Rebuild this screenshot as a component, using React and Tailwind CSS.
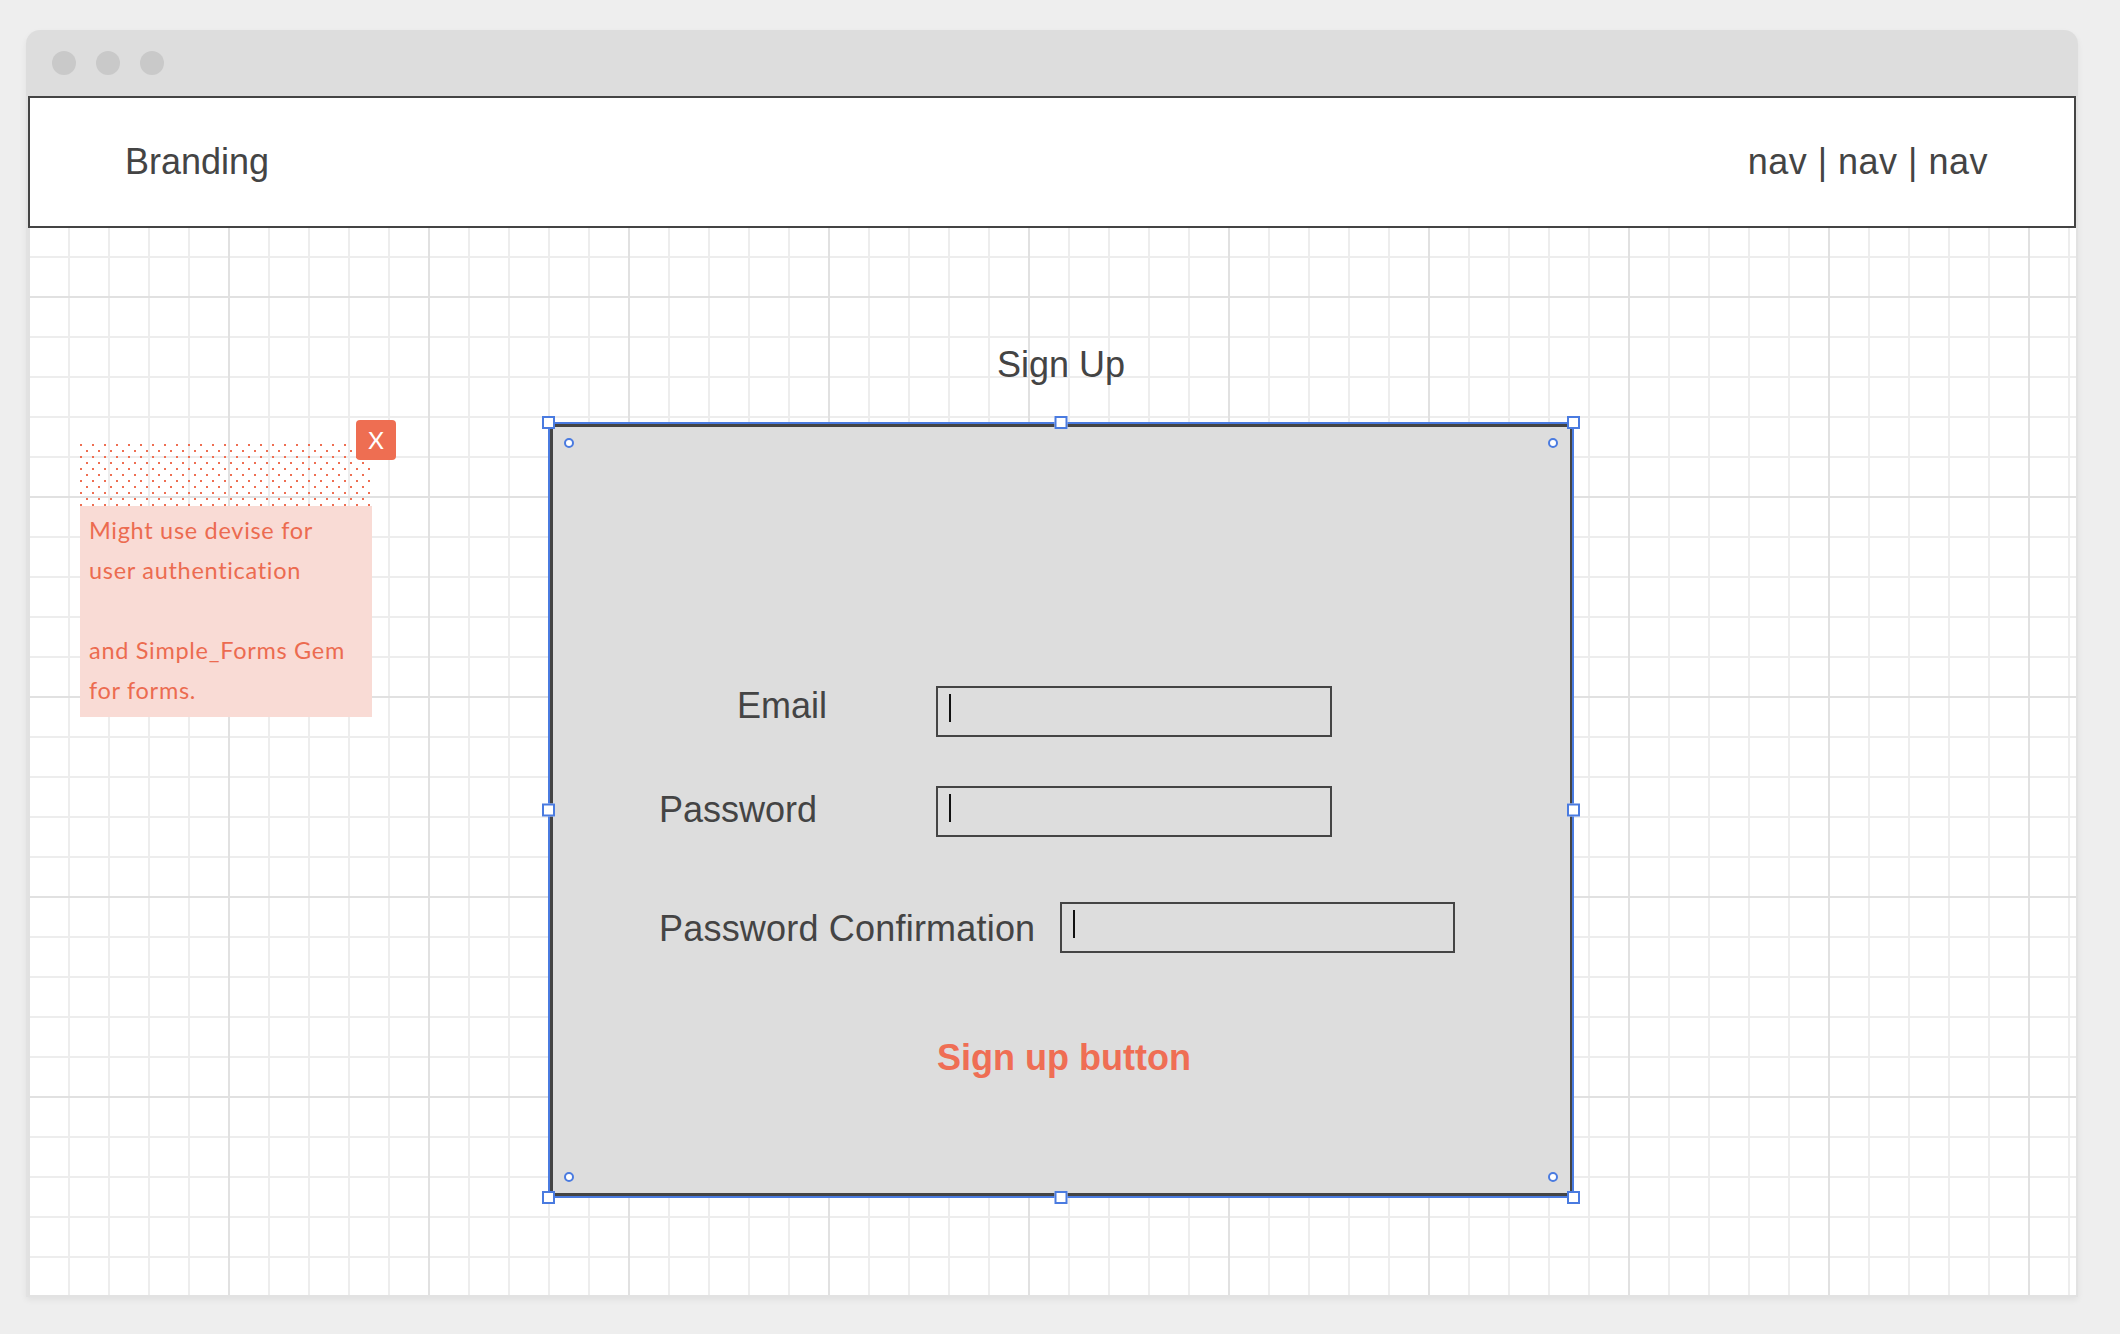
import React from 'react';

const arial = { fontFamily: '"Liberation Sans", Arial, sans-serif' };
const lato = { fontFamily: 'Lato, "Open Sans", sans-serif' };

const Handle = ({ className }) => (
  <div className={`absolute w-[13px] h-[13px] bg-white border-2 border-[#4a7be0] ${className}`} />
);

const Ring = ({ className }) => (
  <div className={`absolute w-[10px] h-[10px] rounded-full bg-white border-2 border-[#4a7be0] ${className}`} />
);

const Cursor = () => <div className="w-[2px] h-[28px] bg-[#111] ml-[11px] mt-[6px]" />;

const Field = ({ width = 'w-[396px]' }) => (
  <div className={`${width} h-[51px] border-2 border-[#444] flex-shrink-0`}>
    <Cursor />
  </div>
);

const StickyNote = () => (
  <div className="absolute left-[52px] top-[192px] w-[316px] pt-[24px]">
    <svg width="292" height="62" className="block">
      <defs>
        <pattern id="dots" width="12" height="12" patternUnits="userSpaceOnUse">
          <rect x="0" y="0" width="2" height="2" fill="#ee6e52" />
          <rect x="6" y="6" width="2" height="2" fill="#ee6e52" />
        </pattern>
      </defs>
      <rect width="292" height="62" fill="url(#dots)" />
    </svg>
    <div
      className="w-[292px] bg-[#f9dbd5] text-[#ec6b50] text-[23.5px] leading-[40px] tracking-[0.7px] pl-[9px] pt-[4px] pb-[7px] whitespace-nowrap"
      style={lato}
    >
      <p>Might use devise for</p>
      <p>user authentication</p>
      <p>&nbsp;</p>
      <p>and Simple_Forms Gem</p>
      <p>for forms.</p>
    </div>
    <button
      className="absolute right-0 top-0 w-[40px] h-[40px] rounded-[4px] bg-[#ee6e52] text-white text-[24px] leading-none flex items-center justify-center"
      style={lato}
    >
      X
    </button>
  </div>
);

const SignUpForm = () => (
  <div className="relative w-[1026px] h-[776px]">
    <div className="h-full border-2 border-[#4a7be0]">
      <div className="h-full border-[3px] border-r-2 border-[#444] bg-[#dddddd] pt-[259px] pl-[106px] text-[#444] text-[36px] leading-none" style={arial}>
        <div className="flex items-start">
          <span className="ml-[78px] w-[199px] mt-[2px]">Email</span>
          <Field />
        </div>
        <div className="flex items-start mt-[49px]">
          <span className="w-[277px] mt-[6px]">Password</span>
          <Field />
        </div>
        <div className="flex items-start mt-[65px]">
          <span className="w-[401px] mt-[9px] whitespace-nowrap tracking-[0.2px]">Password Confirmation</span>
          <Field width="w-[395px]" />
        </div>
        <div className="mt-[87px] ml-[278px] font-bold text-[#ef6e54]">Sign up button</div>
      </div>
    </div>
    <Handle className="-left-[6px] -top-[6px]" />
    <Handle className="left-1/2 -translate-x-1/2 -top-[6px]" />
    <Handle className="-right-[6px] -top-[6px]" />
    <Handle className="-left-[6px] top-1/2 -translate-y-1/2" />
    <Handle className="-right-[6px] top-1/2 -translate-y-1/2" />
    <Handle className="-left-[6px] -bottom-[6px]" />
    <Handle className="left-1/2 -translate-x-1/2 -bottom-[6px]" />
    <Handle className="-right-[6px] -bottom-[6px]" />
    <Ring className="left-[16px] top-[16px]" />
    <Ring className="right-[16px] top-[16px]" />
    <Ring className="left-[16px] bottom-[16px]" />
    <Ring className="right-[16px] bottom-[16px]" />
  </div>
);

export default function App() {
  return (
    <div className="w-[2120px] h-[1334px] bg-[#eeeeee] pt-[30px] pl-[26px] overflow-hidden">
      <div className="w-[2052px] rounded-t-[14px] overflow-hidden shadow-[0_3px_6px_rgba(0,0,0,0.06)]">
        <div className="h-[66px] bg-[#dddddd] flex items-center pl-[26px] gap-[20px]">
          <span className="w-[24px] h-[24px] rounded-full bg-[#c9c9c9]" />
          <span className="w-[24px] h-[24px] rounded-full bg-[#c9c9c9]" />
          <span className="w-[24px] h-[24px] rounded-full bg-[#c9c9c9]" />
        </div>
        <div className="h-[1201px] border-x-2 border-b-2 border-[#e2e2e2] bg-white bg-[image:linear-gradient(to_right,#e1e1e1_2px,transparent_2px),linear-gradient(to_bottom,#e1e1e1_2px,transparent_2px),linear-gradient(to_right,#ededed_2px,transparent_2px),linear-gradient(to_bottom,#ededed_2px,transparent_2px)] bg-[size:200px_200px,200px_200px,40px_40px,40px_40px]">
          <header
            className="h-[132px] border-2 border-[#444] bg-white flex items-center justify-between pl-[95px] pr-[86px] text-[36px] leading-none text-[#444]"
            style={arial}
          >
            <span>Branding</span>
            <span className="tracking-[0.5px]">nav | nav | nav</span>
          </header>
          <main className="relative h-[1067px]">
            <StickyNote />
            <div className="ml-[520px] w-[1026px] pt-[119px]">
              <h1 className="text-center text-[36px] leading-none text-[#444] mb-[39px]" style={arial}>
                Sign Up
              </h1>
              <SignUpForm />
            </div>
          </main>
        </div>
      </div>
    </div>
  );
}
